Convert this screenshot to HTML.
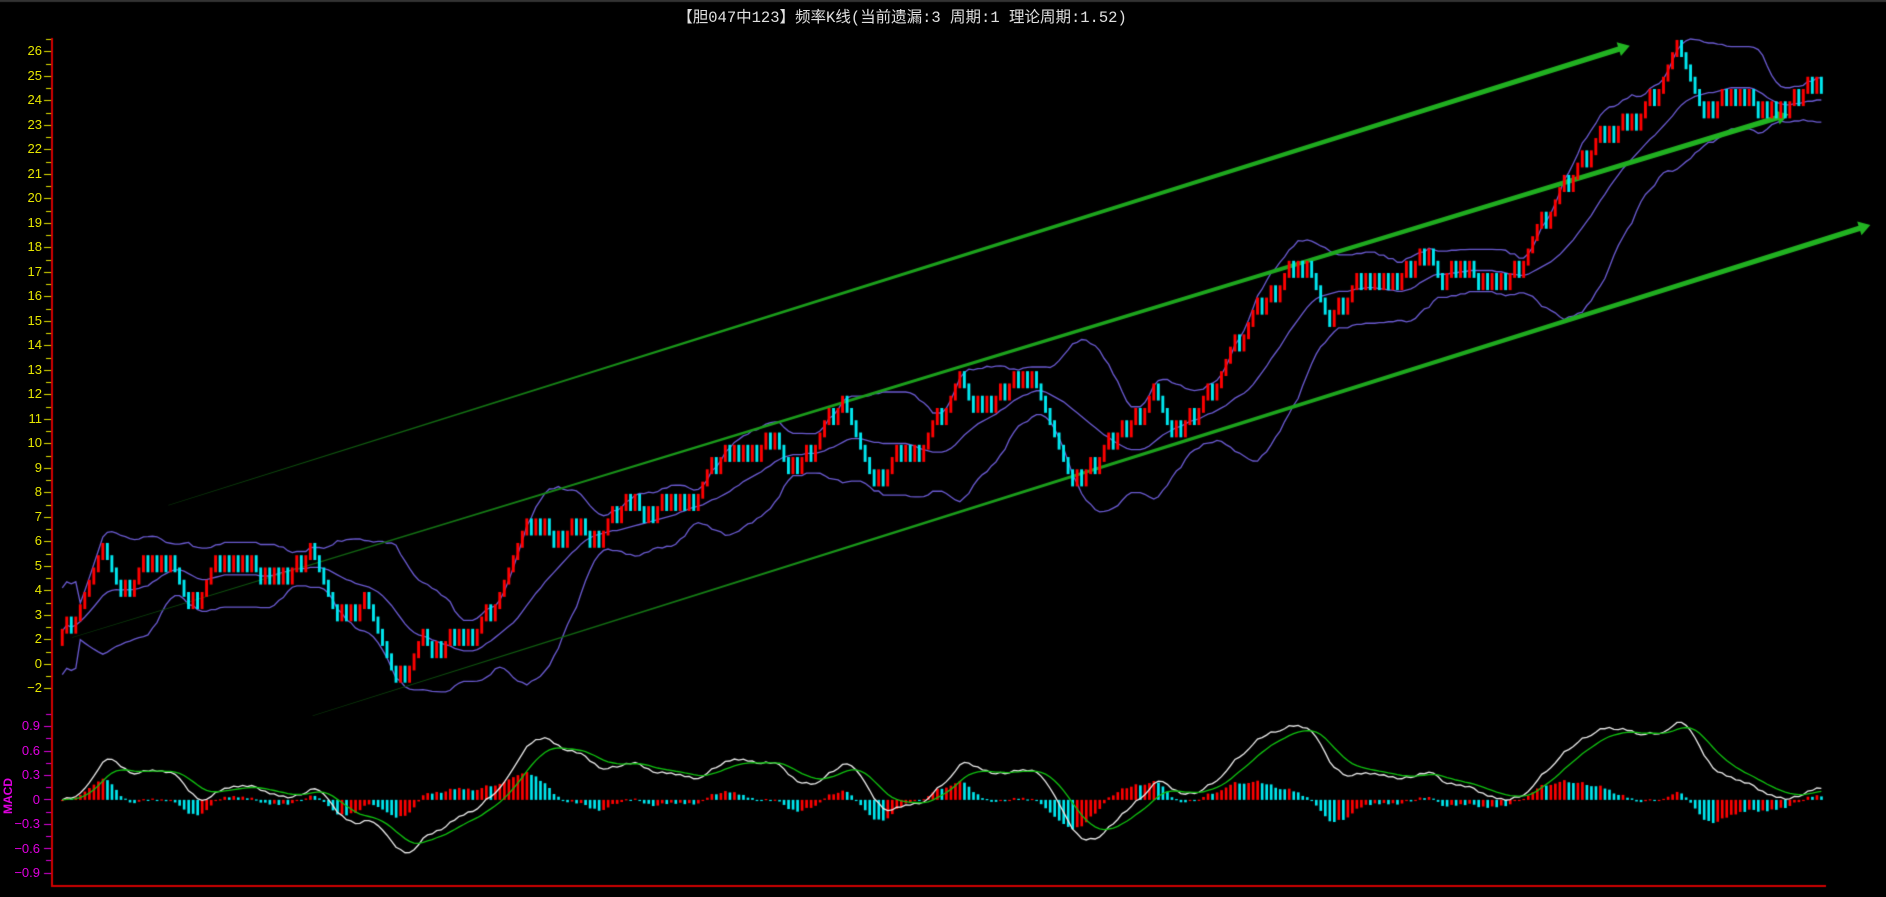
<!DOCTYPE html>
<html><head><meta charset="utf-8">
<style>
html,body{margin:0;padding:0;background:#000;width:1886px;height:897px;overflow:hidden}
#c{position:absolute;left:0;top:0}
.t{position:absolute;top:5px;left:0;width:1804px;text-align:center;color:#e0e0e0;font:15.5px "Liberation Mono","Noto Sans CJK SC",monospace;white-space:nowrap}
.py{position:absolute;width:42px;text-align:right;color:#e6e600;font:13px "Liberation Sans",sans-serif;left:0}
.my{position:absolute;width:40px;text-align:right;color:#e000e0;font:13px "Liberation Sans",sans-serif;left:0}
.macd{position:absolute;left:-10px;top:789px;color:#e000e0;font:bold 12px "Liberation Sans",sans-serif;transform:rotate(-90deg)}
</style></head><body>
<canvas id="c" width="1886" height="897"></canvas>
<div class="t">【胆047中123】频率K线(当前遗漏:3 周期:1 理论周期:1.52)</div>
<div id="labels"></div>
<div class="macd">MACD</div>
<script>
var L=document.getElementById('labels'),h='';
for(var p=26;p>=2;p--){var y=51+(26-p)*24.5;h+='<div class="py" style="top:'+(y-8)+'px">'+p+'</div>';}
h+='<div class="py" style="top:'+(663.5-8)+'px">0</div>';
h+='<div class="py" style="top:'+(688-8)+'px">−2</div>';
var ml=[['0.9',726],['0.6',751],['0.3',775],['0',800],['−0.3',824],['−0.6',849],['−0.9',873]];
ml.forEach(function(m){h+='<div class="my" style="top:'+(m[1]-8)+'px">'+m[0]+'</div>';});
L.innerHTML=h;

var cv=document.getElementById('c'),ctx=cv.getContext('2d');
ctx.fillStyle='#333';ctx.fillRect(0,0,1886,2);
ctx.fillStyle='#d00000';ctx.fillRect(51,38,2,849);ctx.fillRect(51,885,1775,2);
ctx.fillStyle='#e6e600';
for(var y=39;y<=690;y+=12.25){var big=Math.abs(((y-51)/24.5)-Math.round((y-51)/24.5))<0.1;ctx.fillRect(big?44:46,Math.round(y),big?7:5,1);}
ctx.fillStyle='#e000e0';
for(var y=714;y<=880;y+=12.2){var big=Math.abs(((y-726)/24.4)-Math.round((y-726)/24.4))<0.1;ctx.fillRect(big?44:46,Math.round(y),big?7:5,1);}

var S=1886/1568;
ctx.save();ctx.scale(S,S);
var W=[[48,535],[85,455],[97,500],[128,455],[160,505],[175,470],[205,458],[215,490],[260,452],[275,515],[303,497],[330,568],[350,520],[358,545],[375,520],[380,538],[415,490],[440,430],[460,455],[480,432],[490,455],[520,408],[535,442],[550,405],[570,420],[605,362],[615,390],[640,357],[655,402],[700,327],[725,405],[745,373],[758,388],[800,305],[810,345],[850,303],[870,360],[893,400],[910,380],[930,355],[960,325],[975,360],[1005,322],[1050,245],[1080,215],[1105,270],[1120,240],[1140,225],[1155,247],[1180,202],[1195,243],[1215,210],[1225,242],[1245,226],[1255,230],[1290,165],[1330,110],[1365,90],[1395,37],[1415,110],[1430,80],[1450,75],[1465,100],[1480,97],[1505,60],[1515,95]];
function interp(x){for(var i=1;i<W.length;i++){if(x<=W[i][0]){var a=W[i-1],b=W[i];return a[1]+(b[1]-a[1])*(x-a[0])/(b[0]-a[0]);}}return W[W.length-1][1];}
var B=[],st=10.2,cur=W[0][1],lastDir=1,dx=3.75;
for(var x=48+dx;x<=1515.1;x+=dx){
 var t=interp(x),d;
 if(t<cur-st*0.5)d=-1;else if(t>cur+st*0.5)d=1;else d=-lastDir;
 B.push({x:x,o:cur,c:cur+d*st});cur+=d*st;lastDir=d;
}
var cl=B.map(function(b){return b.c;}),N=20,mid=[],up=[],dn=[];
for(var i=0;i<B.length;i++){var s=Math.max(0,i-N+1),sum=0,c=0;for(var j=s;j<=i;j++){sum+=cl[j];c++;}var m=sum/c,v=0;for(var j=s;j<=i;j++)v+=(cl[j]-m)*(cl[j]-m);var sd=Math.sqrt(v/c);if(c<5)sd=18;mid.push(m);up.push(m-2*sd);dn.push(m+2*sd);}
function line(arr,col,w){ctx.strokeStyle=col;ctx.lineWidth=w;ctx.beginPath();for(var i=0;i<B.length;i++){var x=B[i].x;i?ctx.lineTo(x,arr[i]):ctx.moveTo(x,arr[i]);}ctx.stroke();}
line(up,'#6a5ad0',1.1);line(mid,'#6a5ad0',1.1);line(dn,'#6a5ad0',1.1);
function arrow(x1,y1,x2,y2,w1,w2,head){
 var dx=x2-x1,dy=y2-y1,l=Math.sqrt(dx*dx+dy*dy),ux=dx/l,uy=dy/l,nx=-uy,ny=ux;
 var hx=x2-ux*head*1.6,hy=y2-uy*head*1.6;
 var g=ctx.createLinearGradient(x1,y1,x2,y2);g.addColorStop(0,'#0a3a0a');g.addColorStop(0.35,'#1a9a1a');g.addColorStop(1,'#22b422');
 ctx.fillStyle=g;ctx.beginPath();
 ctx.moveTo(x1+nx*w1/2,y1+ny*w1/2);ctx.lineTo(hx+nx*w2/2,hy+ny*w2/2);ctx.lineTo(hx+nx*head,hy+ny*head);ctx.lineTo(x2,y2);
 ctx.lineTo(hx-nx*head,hy-ny*head);ctx.lineTo(hx-nx*w2/2,hy-ny*w2/2);ctx.lineTo(x1-nx*w1/2,y1-ny*w1/2);ctx.closePath();ctx.fill();
}
arrow(140,420,1355,38,0.4,4.5,6);
arrow(60,530,1487,95,0.4,4.5,6);
arrow(260,595,1555,187,0.4,4.5,6);
for(var i=0;i<B.length;i++){var b=B[i],t=Math.min(b.o,b.c),hh=Math.abs(b.c-b.o)+4;ctx.fillStyle=b.c<b.o?'#ff0000':'#00e8f0';ctx.fillRect(b.x-1.2,t-2,2.4,hh);}
var pr=cl.map(function(y){return -y;});
function ema(a,n){var r=[],k=2/(n+1);a.forEach(function(v,i){r.push(i?r[i-1]+k*(v-r[i-1]):v);});return r;}
var e1=ema(pr,12),e2=ema(pr,26),dif=e1.map(function(v,i){return v-e2[i];}),dea=ema(dif,9);
var mx=0,hm=0;dif.forEach(function(v,i){mx=Math.max(mx,Math.abs(v));hm=Math.max(hm,Math.abs(v-dea[i]));});var k=0.95/mx,kh=0.36/hm;
var Z=665,U=67.8;
for(var i=0;i<B.length;i++){var hv=(dif[i]-dea[i])*kh,pv=i?(dif[i-1]-dea[i-1])*kh:0;ctx.fillStyle=hv>=pv?'#ff0000':'#00e8f0';var y=Z-hv*U;ctx.fillRect(B[i].x-1,Math.min(Z,y),2.2,Math.max(1,Math.abs(y-Z)));}
function ml2(arr,col){ctx.strokeStyle=col;ctx.lineWidth=1.1;ctx.beginPath();for(var i=0;i<B.length;i++){var y=Z-arr[i]*k*U;i?ctx.lineTo(B[i].x,y):ctx.moveTo(B[i].x,y);}ctx.stroke();}
ml2(dif,'#e8e8e8');ml2(dea,'#10c010');
ctx.restore();
</script>
</body></html>
